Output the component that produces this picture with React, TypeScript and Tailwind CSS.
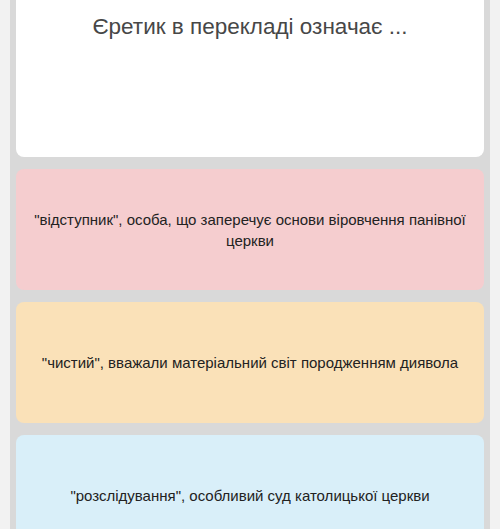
import React from 'react';

type Answer = { text: string; bg: string };

const answers: Answer[] = [
  {
    text: '"відступник", особа, що заперечує основи віровчення панівної церкви',
    bg: 'bg-[#f5cdcf]',
  },
  {
    text: '"чистий", вважали матеріальний світ породженням диявола',
    bg: 'bg-[#fae1b8]',
  },
  {
    text: '"розслідування", особливий суд католицької церкви',
    bg: 'bg-[#d9eff9]',
  },
];

export default function App() {
  return (
    <div
      className="h-[529px] w-[500px] overflow-hidden bg-[#f2f2f2] px-[10px]"
      style={{ fontFamily: '"Liberation Sans", Arial, sans-serif' }}
    >
      <div className="flex h-full flex-col gap-3 bg-[#d9d9d9] px-[6px]">
        {/* question card */}
        <div className="-mt-2 flex h-[165px] shrink-0 justify-center rounded-b-lg bg-white pt-[24px]">
          <h1 className="text-[22.5px] leading-none text-[#474747]">Єретик в перекладі означає ...</h1>
        </div>

        {answers.map((a) => (
          <div
            key={a.text}
            className={`flex h-[121px] shrink-0 items-center justify-center rounded-lg px-4 text-center ${a.bg}`}
          >
            <p className="text-[15px] leading-[21px] text-[#222]">{a.text}</p>
          </div>
        ))}
      </div>
    </div>
  );
}
